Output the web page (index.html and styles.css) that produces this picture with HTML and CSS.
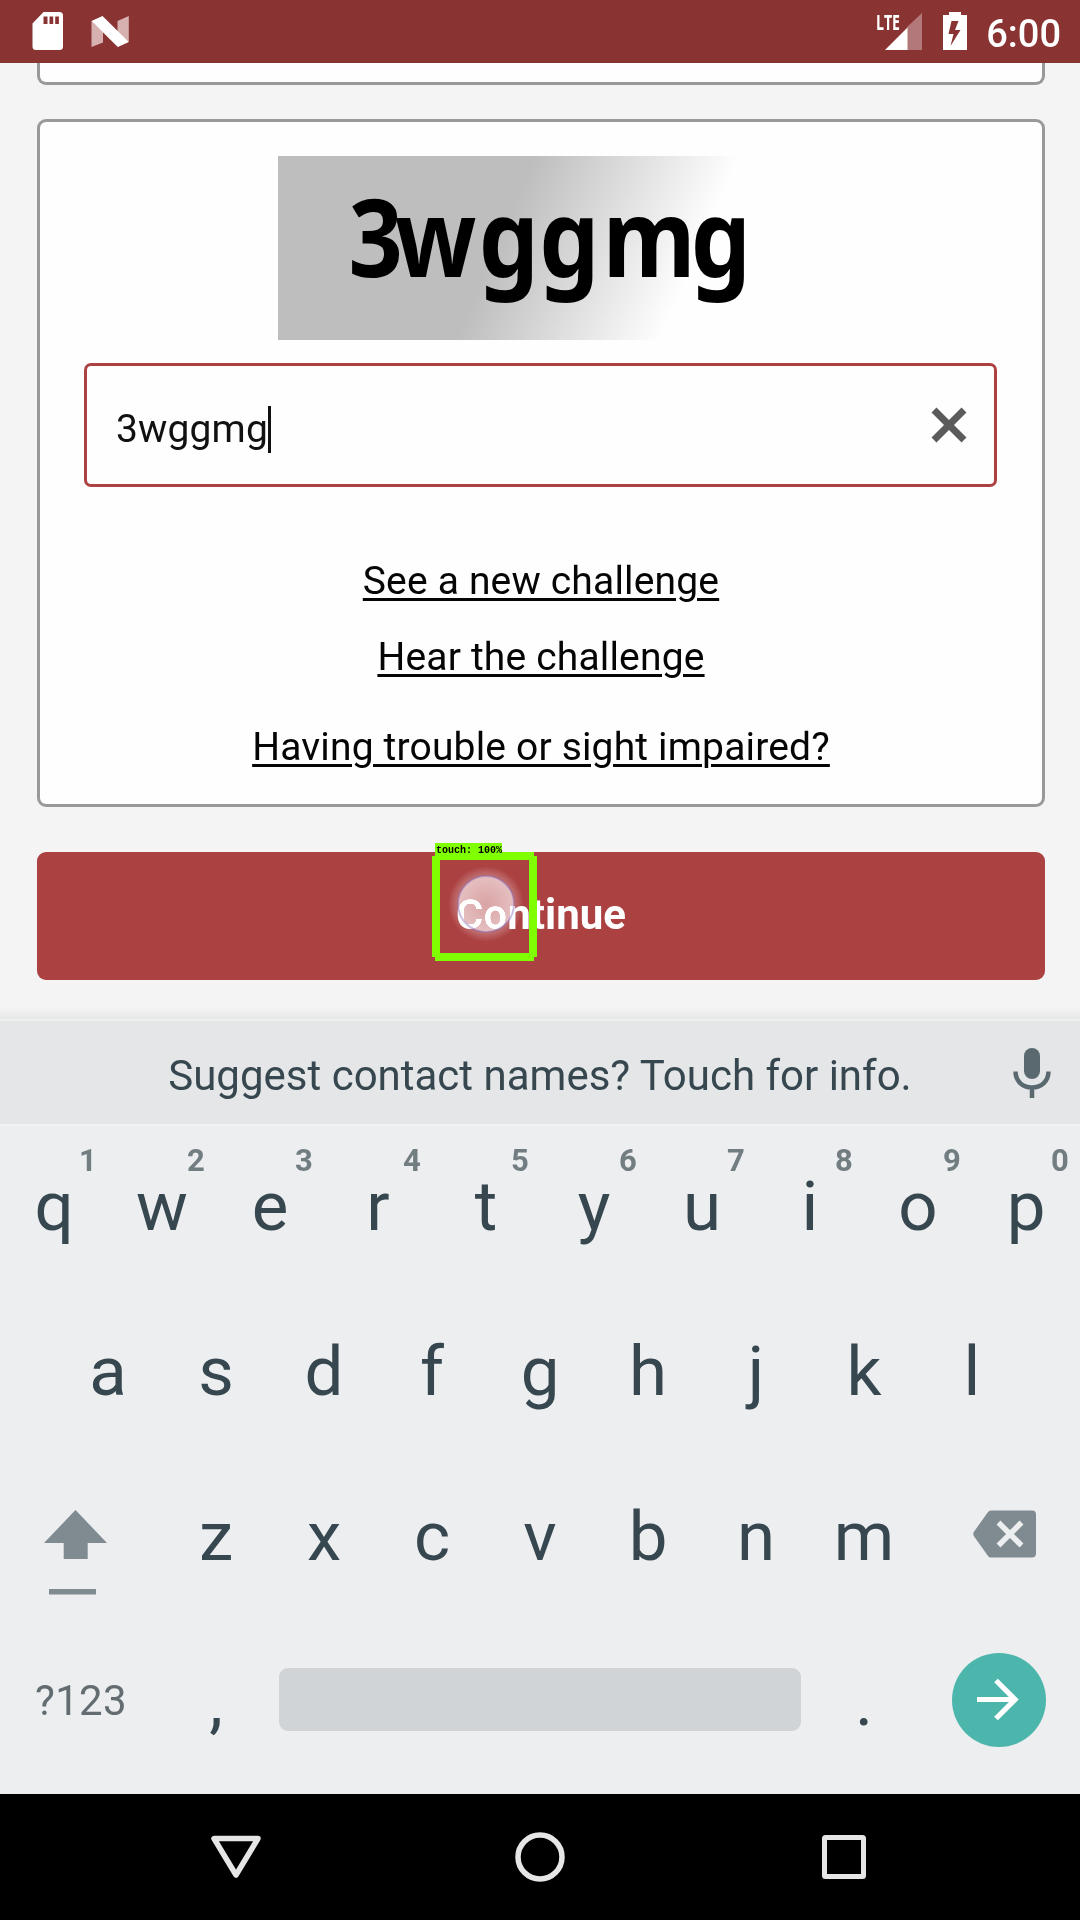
FILE: index.html
```html
<!DOCTYPE html>
<html lang="en">
<head>
<meta charset="utf-8">
<title>Challenge</title>
<link rel="stylesheet" href="styles.css">
</head>
<body>
<header class="status">
  <svg class="sd" width="32" height="38" viewBox="0 0 32 38"><path fill="#fff" fill-rule="evenodd" d="M11.5 0H27.500a3.500 3.500 0 0 1 3.500 3.500V34.500a3.500 3.500 0 0 1-3.500 3.500H4a3.500 3.500 0 0 1-3.500-3.500V11.500zM11.500 4.500v7.500h4V4.500zM17.500 4.500v7.500h3.700V4.500zM23.200 4.500v7.500h3.700V4.500z"/></svg>
  <svg class="nougat" width="38" height="32" viewBox="0 0 38 32"><path fill="#d7b0b0" d="M.5 5L12 16v10.500L.5 31zM26.500 5L37.800 0v26L26.500 17z"/><path fill="#fff" d="M.5 5L11.500 0 37.800 26 26.800 31z"/></svg>
  <span class="grow"></span>
  <svg class="signal" width="47" height="38" viewBox="0 0 47 38"><path fill="#b37879" d="M46 1v37H31V15z"/><path fill="#fff" d="M31.500 15.500V38H9z"/><text class="lte" x="0" y="17.500" textLength="24" lengthAdjust="spacingAndGlyphs">LTE</text></svg>
  <svg class="battery" width="24" height="38" viewBox="0 0 24 38"><path fill="#fff" fill-rule="evenodd" d="M6 0H18V3H24V38H0V3H6zM8.500 9L5.500 22h5L7.500 34 17.500 18H12L15.500 9z"/></svg>
  <span class="time">6:00</span>
</header>

<main class="page">
  <section class="card previous"></section>
  <section class="card challenge">
    <svg class="captcha" width="525" height="184" viewBox="0 0 525 184">
      <defs><linearGradient id="fade" gradientUnits="userSpaceOnUse" x1="218" y1="92" x2="390" y2="166"><stop offset="0" stop-color="#bebebe"/><stop offset="1" stop-color="#fefefe"/></linearGradient></defs>
      <rect width="525" height="184" fill="url(#fade)"/>
      <text class="captcha-text" transform="scale(.88 1)" y="121" x="80 133 228 297 369 469">3wggmg</text>
    </svg>
    <div class="field">
      <span class="value">3wggmg</span><span class="caret"></span>
      <svg class="clear" width="36" height="36" viewBox="0 0 36 36"><path d="M3 3L33 33M33 3L3 33" stroke="#5b5b5b" stroke-width="7"/></svg>
    </div>
    <a class="link first">See a new challenge</a>
    <a class="link second">Hear the challenge</a>
    <a class="link third">Having trouble or sight impaired?</a>
  </section>
  <div class="button">Continue
    <svg class="touch glow" width="110" height="122" viewBox="0 0 110 122">
      <defs><radialGradient id="halo"><stop offset=".65" stop-color="#fff" stop-opacity=".35"/><stop offset="1" stop-color="#fff" stop-opacity="0"/></radialGradient>
      <radialGradient id="dot"><stop offset="0" stop-color="#d9a3a3"/><stop offset="1" stop-color="#e6c0c2"/></radialGradient></defs>
      <circle cx="56" cy="62" r="38" fill="url(#halo)"/>
      <circle cx="56" cy="62" r="28" fill="url(#dot)"/>
    </svg>
    <svg class="touch" width="110" height="122" viewBox="0 0 110 122">
      <circle cx="56" cy="62" r="28" fill="none" stroke="#8065b8" stroke-opacity=".4" stroke-width="2"/>
      <path fill="#80ff00" d="M5 1H72V10H104V14H107V115H104V119H5V115H2V14H5zM10 18V111H99V18z" fill-rule="evenodd"/>
      <text class="touch-label" x="6" y="10.500">touch: 100%</text>
    </svg>
  </div>
</main>

<section class="keyboard">
  <div class="suggest"><span>Suggest contact names? Touch for info.</span>
    <svg class="mic" width="38" height="52" viewBox="0 0 38 52"><rect x="11" y="1" width="16" height="31" rx="8" fill="#5a686f"/><path d="M2.500 24.500C2.500 34 9.500 40.500 19 40.500S35.500 34 35.500 24.500M19 40.500V51" fill="none" stroke="#5a686f" stroke-width="4.500"/></svg>
  </div>
  <div class="row">
    <b class="key">q<i>1</i></b><b class="key">w<i>2</i></b><b class="key">e<i>3</i></b><b class="key">r<i>4</i></b><b class="key">t<i>5</i></b><b class="key">y<i>6</i></b><b class="key">u<i>7</i></b><b class="key">i<i>8</i></b><b class="key">o<i>9</i></b><b class="key">p<i>0</i></b>
  </div>
  <div class="row">
    <b class="key">a</b><b class="key">s</b><b class="key">d</b><b class="key">f</b><b class="key">g</b><b class="key">h</b><b class="key">j</b><b class="key">k</b><b class="key">l</b>
  </div>
  <div class="row">
    <span class="wide"><svg class="shift" width="64" height="86" viewBox="0 0 64 86"><path fill="#7f8b90" d="M31.500 0L63 33H43.700V49H19.700V33H0zM5 79H52v5.500H5z"/></svg></span>
    <b class="key">z</b><b class="key">x</b><b class="key">c</b><b class="key">v</b><b class="key">b</b><b class="key">n</b><b class="key">m</b>
    <span class="wide"><svg class="erase" width="64" height="48" viewBox="0 0 64 48"><path fill="#7f8b90" d="M18 .5H59a4 4 0 0 1 4 4V43.500a4 4 0 0 1-4 4H18q-2 0-3-1.500L.8 26q-1-2 0-4L15 2q1-1.500 3-1.500z"/><path d="M25.500 12.500L48.500 35.500M48.500 12.500L25.500 35.500" stroke="#eceef0" stroke-width="5.500"/></svg></span>
  </div>
  <div class="row last">
    <span class="wide symbols">?123</span>
    <b class="key">,</b>
    <span class="space"></span>
    <b class="key">.</b>
    <span class="wide"><svg class="go" width="94" height="94" viewBox="0 0 94 94"><circle cx="47" cy="47" r="47" fill="#4db6ac"/><path d="M25 46.500H64M44 27.500L63 46.500 44 65.500" fill="none" stroke="#fff" stroke-width="5.200"/></svg></span>
  </div>
</section>

<nav class="nav">
  <svg width="52" height="52" viewBox="0 0 52 52"><path d="M4 7.500H48L26 44z" fill="none" stroke="#e6e6e6" stroke-width="5.500" stroke-linejoin="round"/></svg>
  <svg width="52" height="52" viewBox="0 0 52 52"><circle cx="26" cy="26" r="22" fill="none" stroke="#e6e6e6" stroke-width="5.500"/></svg>
  <svg width="52" height="52" viewBox="0 0 52 52"><rect x="6.500" y="6.500" width="39" height="39" rx="1" fill="none" stroke="#e6e6e6" stroke-width="5"/></svg>
</nav>
</body>
</html>
```
FILE: styles.css
```css
* { box-sizing: border-box; }
body { margin: 0; width: 1080px; height: 1920px; overflow: hidden; display: flex; flex-direction: column; font-family: Roboto, sans-serif; background: #f4f4f4; }
svg { display: block; flex: none; overflow: visible; }
.status { height: 63px; flex: none; background: #893433; display: flex; align-items: flex-start; padding: 12px 19px 0 32px; color: #fff; }
.nougat { margin: 4px 0 0 27px; }
.grow { flex: 1; }
.lte { font: bold 21px "Open Sans", sans-serif; fill: #fff; }
.battery { margin: 0 19px 0 20px; }
.time { font-size: 38px; font-weight: 500; line-height: 44px; }

.page { height: 958px; flex: none; padding: 0 35px 0 37px; position: relative; background: linear-gradient(#f4f4f4 944px, #e6e7e7 956px, #efefef 956px); }
.card { background: #fefefe; border: 3px solid #999; border-radius: 9px; }
.previous { height: 22px; border-top: 0; border-radius: 0 0 9px 9px; }
.challenge { height: 688px; margin-top: 34px; display: flex; flex-direction: column; align-items: center; padding-top: 34px; }
.captcha { margin-left: -2px; }
.captcha-text { font: bold 108px "Noto Sans", sans-serif; fill: #000; }
.field { width: 913px; height: 124px; margin-top: 23px; margin-left: -1px; border: 3px solid #ac4142; border-radius: 7px; display: flex; align-items: center; padding: 8px 27px 0 29px; color: #111; }
.value { font-size: 39px; line-height: 46px; letter-spacing: .15px; }
.caret { width: 3px; height: 47px; background: #111; }
.clear { margin: -8px 0 0 auto; }
.link { font-size: 39px; line-height: 46px; letter-spacing: .17px; color: #050505; text-decoration: underline; text-decoration-thickness: 3px; text-underline-offset: 4px; white-space: nowrap; }
.first { margin-top: 71px; }
.second { margin-top: 30px; }
.third { margin-top: 44px; }
.button { height: 128px; margin-top: 45px; background: #ac4142; border-radius: 9px; position: relative; color: #fff; font-size: 42px; font-weight: 700; line-height: 125px; text-align: center; }
.touch { position: absolute; left: 393px; top: -10px; }
.glow { mix-blend-mode: lighten; }
.touch-label { font: bold 10px "Liberation Mono", monospace; fill: #000; }

.keyboard { height: 773px; flex: none; background: #eceef0; color: #37474f; }
.suggest { height: 103px; background: #e4e6e7; position: relative; font-size: 42px; line-height: 109px; text-align: center; box-shadow: 0 2px 0 #f2f4f4; }
.mic { position: absolute; left: 1013px; top: 26px; }
.row { height: 165px; display: flex; justify-content: center; align-items: center; }
.key { width: 108px; font-size: 69px; font-weight: 400; line-height: 165px; text-align: center; position: relative; }
.key i { position: absolute; left: 64px; width: 48px; top: 19px; font-size: 31px; font-weight: 700; font-style: normal; line-height: 36px; color: #727d82; text-align: center; }
.wide { width: 162px; display: flex; }
.shift { margin: 33px 0 0 44px; }
.erase { margin: -6px 0 0 55px; }
.symbols { font-size: 42px; letter-spacing: .3px; color: #626c71; padding: 0 0 2px 35px; }
.space { width: 522px; height: 63px; margin: 0 9px; background: #d0d4d7; border-radius: 9px; position: relative; top: -2px; }
.go { margin: -4px 0 0 34px; }

.nav { height: 126px; flex: none; background: #000; display: flex; justify-content: center; align-items: center; gap: 252px; }
```
